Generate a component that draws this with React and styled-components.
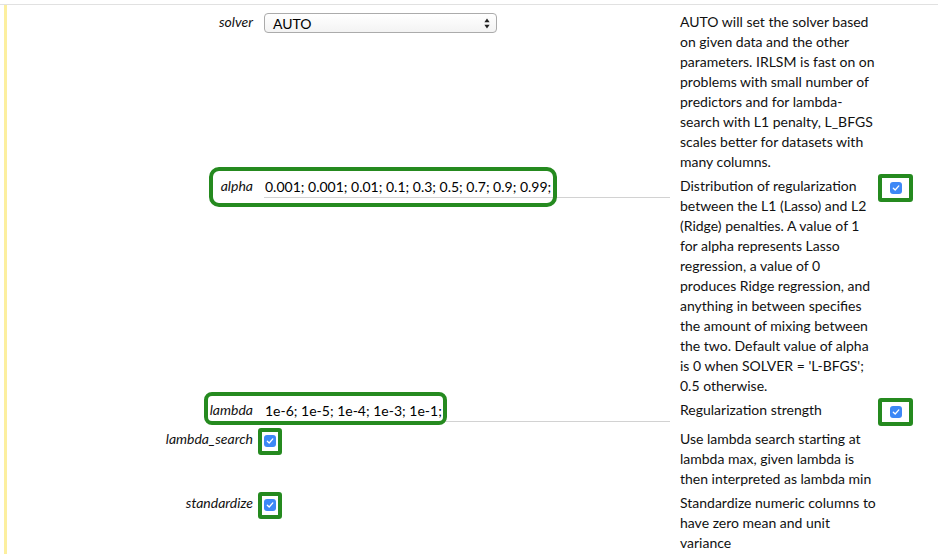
import React from "react";
import styled, { createGlobalStyle } from "styled-components";

const Global = createGlobalStyle`
  html, body { margin: 0; padding: 0; background: #fff; }
  body { font-family: Lato, "Open Sans", sans-serif; color: #111; }
  * { box-sizing: border-box; }
`;

const Page = styled.div`
  width: 938px;
  height: 554px;
  overflow: hidden;
  padding-top: 4px;
`;

const Frame = styled.div`
  border-top: 1px solid #e1e1e1;
  height: 100%;
`;

const Panel = styled.div`
  margin-left: 4px;
  border-left: 3px solid #fcef9f;
  height: 100%;
  padding-top: 7px;
  display: flex;
  flex-direction: column;
  gap: 4px;
`;

const Row = styled.div`
  position: relative;
  display: grid;
  grid-template-columns: 257px 416px 198px 36px;
  align-items: start;
  padding-bottom: ${(p) => p.$extra || 0}px;
`;

const Label = styled.div`
  font-style: italic;
  font-size: 14px;
  line-height: 20px;
  text-align: right;
  padding-right: 11px;
  color: #111;
`;

const Desc = styled.div`
  font-size: 14px;
  line-height: 20px;
  color: #111;
`;

const Select = styled.div`
  width: 233px;
  height: 20px;
  margin-top: 1px;
  border: 1px solid #ababab;
  border-radius: 4px;
  background: linear-gradient(#ffffff, #f3f3f3);
  display: flex;
  align-items: center;
  justify-content: space-between;
  padding: 0 6px 0 8px;
  font-size: 14px;
  color: #000;
`;

const TextInput = styled.input`
  width: 406px;
  height: 22px;
  border: none;
  border-bottom: 1px solid #d2d2d2;
  outline: none;
  padding: 0 1px;
  font-family: Lato, "Open Sans", sans-serif;
  font-size: 14px;
  color: #000;
  background: transparent;
`;

const Mark = styled.div`
  position: absolute;
  left: ${(p) => p.$left}px;
  top: ${(p) => p.$top}px;
  width: ${(p) => p.$w}px;
  height: ${(p) => p.$h}px;
  border: 4px solid #258a1f;
  border-radius: ${(p) => p.$r}px;
  pointer-events: none;
`;

const BoxMark = styled.div`
  display: inline-flex;
  align-items: center;
  justify-content: center;
  width: ${(p) => p.$w}px;
  height: ${(p) => p.$h}px;
  margin: -4px 0 ${(p) => 20 - p.$h + 4}px ${(p) => p.$ml || 0}px;
  border: 4px solid #258a1f;
  border-radius: 3px;
`;

const Check = styled.span`
  width: 12px;
  height: 12px;
  border-radius: 3px;
  background: #3d88f6;
  display: inline-flex;
  align-items: center;
  justify-content: center;
`;

function Checkbox() {
  return (
    <Check>
      <svg width="8" height="8" viewBox="0 0 8 8">
        <path d="M1.3 4.2 L3.2 6 L6.8 1.9" fill="none" stroke="#fff" strokeWidth="1.3" strokeLinecap="round" strokeLinejoin="round" />
      </svg>
    </Check>
  );
}

function Arrows() {
  return (
    <svg width="6" height="11" viewBox="0 0 6 11">
      <path d="M3 0.5 L5.6 4.2 L0.4 4.2 Z" fill="#222" />
      <path d="M3 10.5 L5.6 6.8 L0.4 6.8 Z" fill="#222" />
    </svg>
  );
}

export default function App() {
  return (
    <>
      <Global />
      <Page>
        <Frame>
          <Panel>
            <Row>
              <Label>solver</Label>
              <div>
                <Select>
                  <span>AUTO</span>
                  <Arrows />
                </Select>
              </div>
              <Desc>
                AUTO will set the solver based on given data and the other parameters. IRLSM is fast on on problems with small number of predictors and for lambda-search with L1 penalty, L_BFGS scales better for datasets with many columns.
              </Desc>
              <div />
            </Row>

            <Row>
              <Label>alpha</Label>
              <div>
                <TextInput readOnly value="0.001; 0.001; 0.01; 0.1; 0.3; 0.5; 0.7; 0.9; 0.99;" />
              </div>
              <Desc>
                Distribution of regularization between the L1 (Lasso) and L2 (Ridge) penalties. A value of 1 for alpha represents Lasso regression, a value of 0 produces Ridge regression, and anything in between specifies the amount of mixing between the two. Default value of alpha is 0 when SOLVER = 'L-BFGS'; 0.5 otherwise.
              </Desc>
              <div>
                <BoxMark $w={35} $h={28}>
                  <Checkbox />
                </BoxMark>
              </div>
              <Mark $left={202} $top={-9} $w={348} $h={40} $r={10} />
            </Row>

            <Row $extra={3}>
              <Label>lambda</Label>
              <div>
                <TextInput readOnly value="1e-6; 1e-5; 1e-4; 1e-3; 1e-1;" />
              </div>
              <Desc>Regularization strength</Desc>
              <div>
                <BoxMark $w={35} $h={28}>
                  <Checkbox />
                </BoxMark>
              </div>
              <Mark $left={197} $top={-8} $w={243} $h={33} $r={8} />
            </Row>

            <Row>
              <Label>lambda_search</Label>
              <div>
                <BoxMark $w={24} $h={27} $ml={-6}>
                  <Checkbox />
                </BoxMark>
              </div>
              <Desc>
                Use lambda search starting at lambda max, given lambda is then interpreted as lambda min
              </Desc>
              <div />
            </Row>

            <Row>
              <Label>standardize</Label>
              <div>
                <BoxMark $w={24} $h={27} $ml={-6}>
                  <Checkbox />
                </BoxMark>
              </div>
              <Desc>
                Standardize numeric columns to have zero mean and unit variance
              </Desc>
              <div />
            </Row>
          </Panel>
        </Frame>
      </Page>
    </>
  );
}
